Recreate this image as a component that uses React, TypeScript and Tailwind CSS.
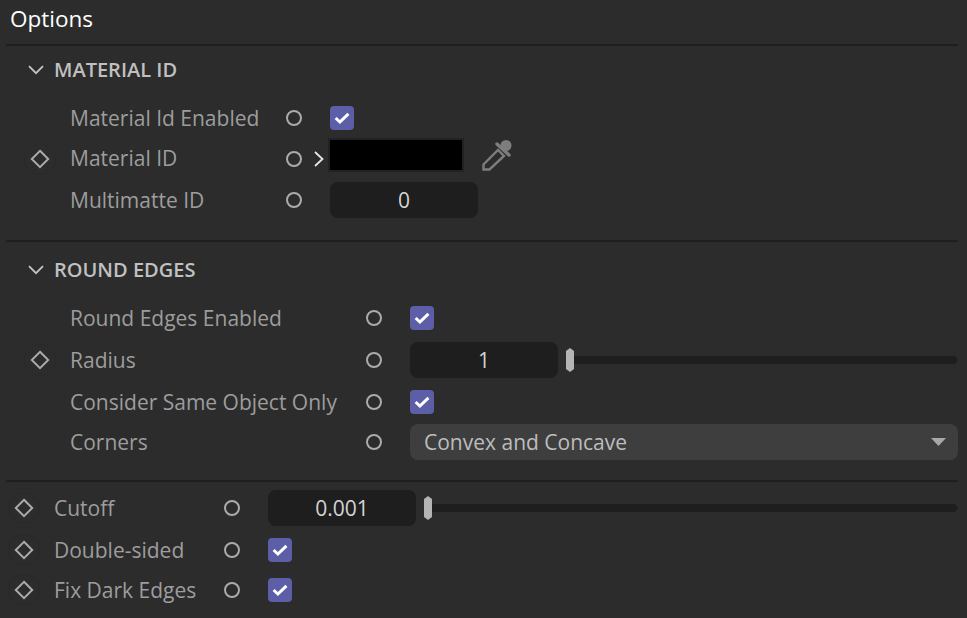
import type { ReactNode } from 'react';

function Dot() {
  return <span className="h-4 w-4 shrink-0 rounded-full border-2 border-[#ababab]" />;
}

function Diamond() {
  return (
    <span className="flex h-8 w-8 shrink-0 items-center justify-center rounded-full border border-[#292929]">
      <svg width="20" height="20" viewBox="0 0 20 20" fill="none">
        <path d="M10 1.8 18.2 10 10 18.2 1.8 10Z" stroke="#ababab" strokeWidth="2" />
      </svg>
    </span>
  );
}

function Check() {
  return (
    <span className="ml-[28px] flex h-6 w-6 shrink-0 items-center justify-center rounded-[4px] bg-[#5c5fa8]">
      <svg width="16" height="16" viewBox="0 0 16 16" fill="none">
        <path d="M1.6 8 5.9 12 14.4 3.8" stroke="#ffffff" strokeWidth="3" />
      </svg>
    </span>
  );
}

function NumberField({ value }: { value: string }) {
  return (
    <div className="flex h-9 w-[148px] shrink-0 items-center justify-center rounded-lg bg-[#1e1e1e] text-[#d4d4d4]">
      {value}
    </div>
  );
}

// Number box followed by the thin slider track with its thumb at the left end.
function Slider({ value }: { value: string }) {
  return (
    <div className="relative ml-[28px] flex flex-1 items-center">
      <NumberField value={value} />
      <div className="ml-2 h-2 flex-1 bg-[#1e1e1e] [clip-path:polygon(0_0,calc(100%-3px)_0,100%_50%,calc(100%-3px)_100%,0_100%)]" />
      <span className="absolute left-[156px] h-6 w-2 bg-[#b4b4b4] [clip-path:polygon(50%_0,100%_12%,100%_88%,50%_100%,0_88%,0_12%)]" />
    </div>
  );
}

function Eyedropper() {
  return (
    <svg width="32" height="32" viewBox="0 0 32 32" fill="none" className="mb-[5px] ml-[18px] shrink-0">
      <path d="M1.5 29.5V24.5L16 10 22 16 7.5 29.5Z" stroke="#7d7d7d" strokeWidth="2.4" />
      <path d="M15 4 27 15" stroke="#7d7d7d" strokeWidth="3.4" strokeLinecap="round" />
      <circle cx="24" cy="5.5" r="5.5" fill="#7d7d7d" />
    </svg>
  );
}

function Row({
  label,
  diamond,
  labelClass,
  height,
  children,
}: {
  label: string;
  diamond?: boolean;
  labelClass: string;
  height: string;
  children: ReactNode;
}) {
  return (
    <div className={`flex items-center ${height}`}>
      <span className="flex w-8 shrink-0 justify-center">{diamond && <Diamond />}</span>
      <span className={`shrink-0 text-[#9d9d9d] ${labelClass}`}>{label}</span>
      <Dot />
      {children}
    </div>
  );
}

function SectionHeader({ title, className }: { title: string; className: string }) {
  return (
    <div className={`flex h-12 items-center pl-[22px] text-[#c0c0c0] ${className}`}>
      <svg width="16" height="10" viewBox="0 0 16 10" fill="none" className="shrink-0">
        <path d="M1 1.2 8 8.2 15 1.2" stroke="#c4c4c4" strokeWidth="1.8" />
      </svg>
      <span className="ml-[10px] text-[20px] font-semibold">{title}</span>
    </div>
  );
}

export default function App() {
  return (
    <div className="h-[618px] w-[967px] overflow-hidden bg-[#2c2c2c] pl-[6px] pr-[9px] font-['Open_Sans','Noto_Sans',sans-serif] text-[21px] leading-none">
      <div className="flex h-[38px] items-center pl-1 pt-px text-[22.5px] text-white">Options</div>
      <div className="mt-[6px] h-0.5 bg-[#1f1f1f]" />

      <SectionHeader title="MATERIAL ID" className="" />
      <div className="mt-1 pl-[18px]">
        <Row label="Material Id Enabled" labelClass="w-[230px] pl-[14px]" height="h-10">
          <Check />
        </Row>
        <Row label="Material ID" diamond labelClass="w-[230px] pl-[14px]" height="h-[41px]">
          <svg width="10" height="16" viewBox="0 0 10 16" fill="none" className="ml-[12px] shrink-0">
            <path d="M1 1 8.5 8 1 15" stroke="#e6e6e6" strokeWidth="1.8" />
          </svg>
          <div className="mb-[7px] ml-[4px] h-[34px] w-[136px] shrink-0 border-2 border-[#222222] bg-black" />
          <Eyedropper />
        </Row>
        <Row label="Multimatte ID" labelClass="w-[230px] pl-[14px]" height="h-[42px]">
          <span className="ml-[28px]"><NumberField value="0" /></span>
        </Row>
      </div>
      <div className="mt-[19px] h-0.5 bg-[#1f1f1f]" />

      <SectionHeader title="ROUND EDGES" className="mt-1" />
      <div className="mt-[3px] pl-[18px]">
        <Row label="Round Edges Enabled" labelClass="w-[310px] pl-[14px]" height="h-[42px]">
          <Check />
        </Row>
        <Row label="Radius" diamond labelClass="w-[310px] pl-[14px]" height="h-[42px]">
          <Slider value="1" />
        </Row>
        <Row label="Consider Same Object Only" labelClass="w-[310px] pl-[14px]" height="h-[42px]">
          <Check />
        </Row>
        <Row label="Corners" labelClass="w-[310px] pl-[14px]" height="h-[38px]">
          <div className="ml-[28px] flex h-9 flex-1 items-center justify-between rounded-lg bg-[#3e3e3e] pl-[14px] pr-[12px] text-[#bdbdbd]">
            Convex and Concave
            <span className="h-2 w-[15px] bg-[#a8a8a8] [clip-path:polygon(0_0,100%_0,50%_100%)]" />
          </div>
        </Row>
      </div>
      <div className="mt-[19px] h-0.5 bg-[#1f1f1f]" />

      <div className="pl-[2px] pt-px">
        <Row label="Cutoff" diamond labelClass="w-[184px] pl-[14px]" height="h-[50px]">
          <Slider value="0.001" />
        </Row>
        <Row label="Double-sided" diamond labelClass="w-[184px] pl-[14px]" height="h-[42px] -mt-1">
          <Check />
        </Row>
        <Row label="Fix Dark Edges" diamond labelClass="w-[184px] pl-[14px]" height="h-[38px]">
          <Check />
        </Row>
      </div>
    </div>
  );
}
